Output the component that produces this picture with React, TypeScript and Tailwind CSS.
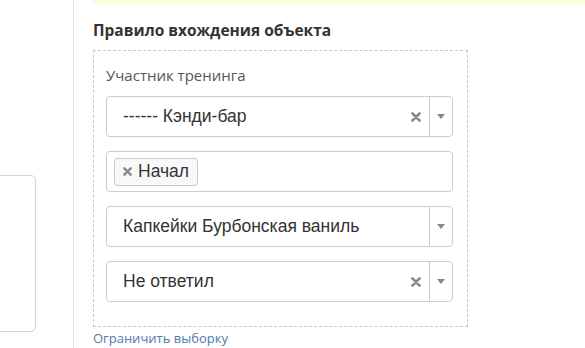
import React from "react";

function Cross({ className }: { className?: string }) {
  return (
    <svg className={className} width="10" height="10" viewBox="0 0 10 10" fill="none">
      <path d="M1.5 1.5l7 7M8.5 1.5l-7 7" stroke="currentColor" strokeWidth="2.6" strokeLinecap="round" />
    </svg>
  );
}

function Caret() {
  return (
    <svg width="8" height="5" viewBox="0 0 8 5">
      <path d="M0 0h8L4 5z" fill="#888" />
    </svg>
  );
}

function Select({ value, clearable }: { value: string; clearable?: boolean }) {
  return (
    <div className="flex h-[41px] w-[347px] items-center rounded-[4px] border border-[#cccccc] bg-white">
      <span className="flex-1 truncate pl-[16px] font-['Liberation_Sans',Arial,sans-serif] text-[17.5px] text-[#333333]">
        {value}
      </span>
      {clearable && <Cross className="mr-[8px] text-[#888888]" />}
      <div className="flex h-full w-[23px] items-center justify-center border-l border-[#cccccc]">
        <Caret />
      </div>
    </div>
  );
}

export default function App() {
  return (
    <div className="flex h-[348px] w-[585px] overflow-hidden bg-white">
      <div className="w-[74px] shrink-0 border-r border-[#e6e6e6] pt-[175px]">
        <div className="-ml-[6px] h-[157px] w-[42px] rounded-[5px] border border-[#d4d4d4]" />
      </div>
      <div className="flex-1 pl-[19px] font-['Open_Sans',sans-serif]">
        <div className="h-[5px] bg-[#fefbe3]" />
        <h2 className="mt-[15px] text-[15.5px] font-bold leading-[20px] text-[#333333]">
          Правило вхождения объекта
        </h2>
        <div className="mt-[10px] h-[277px] w-[375px] border border-dashed border-[#c8c8c8] pl-[12px] pt-[14px]">
          <p className="mb-[11px] text-[15px] leading-[20px] text-[#555555]">Участник тренинга</p>
          <div className="flex flex-col gap-[14px]">
            <Select value="------ Кэнди-бар" clearable />
            <div className="flex h-[41px] w-[347px] items-center rounded-[4px] border border-[#cccccc] bg-white pl-[7px]">
              <div className="flex h-[28px] items-center gap-[6px] rounded-[3px] border border-[#cccccc] bg-[#f8f8f8] pl-[8px] pr-[8px]">
                <Cross className="h-[9px] w-[9px] text-[#888888]" />
                <span className="font-['Liberation_Sans',Arial,sans-serif] text-[17.5px] text-[#333333]">Начал</span>
              </div>
            </div>
            <Select value="Капкейки Бурбонская ваниль" />
            <Select value="Не ответил" clearable />
          </div>
        </div>
        <a className="mt-[2px] block text-[13px] leading-[18px] text-[#4f7cab]">Ограничить выборку</a>
      </div>
    </div>
  );
}
